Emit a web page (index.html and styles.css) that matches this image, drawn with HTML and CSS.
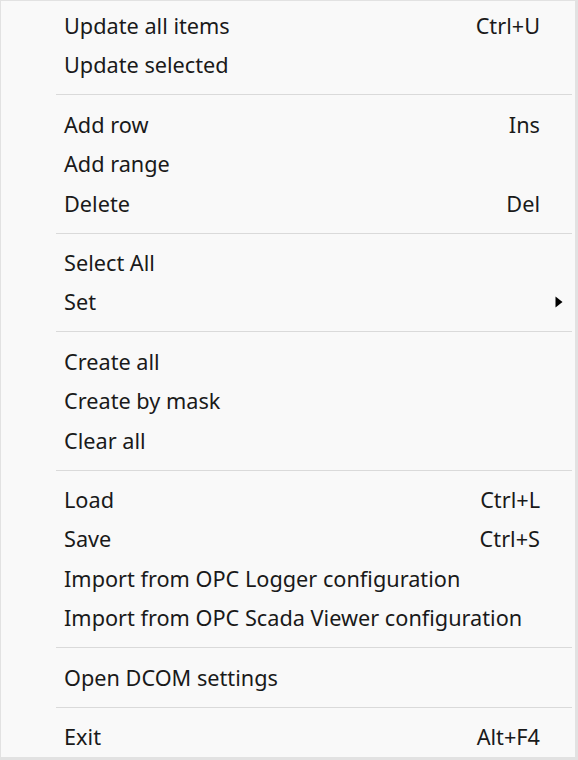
FILE: index.html
```html
<!DOCTYPE html>
<html>
<head>
<meta charset="utf-8">
<link rel="stylesheet" href="styles.css">
</head>
<body>
<ul class="menu">
  <li class="item"><span class="label">Update all items</span><span class="key">Ctrl+U</span><span class="sub"></span></li>
  <li class="item"><span class="label">Update selected</span><span class="key"></span><span class="sub"></span></li>
  <li class="sep"></li>
  <li class="item"><span class="label">Add row</span><span class="key">Ins</span><span class="sub"></span></li>
  <li class="item"><span class="label">Add range</span><span class="key"></span><span class="sub"></span></li>
  <li class="item"><span class="label">Delete</span><span class="key">Del</span><span class="sub"></span></li>
  <li class="sep"></li>
  <li class="item"><span class="label">Select All</span><span class="key"></span><span class="sub"></span></li>
  <li class="item"><span class="label">Set</span><span class="key"></span><span class="sub"><svg class="arrow" width="8" height="12" viewBox="0 0 8 12"><path d="M0.5 0.5 L7.5 6 L0.5 11.5 Z" fill="#000"/></svg></span></li>
  <li class="sep"></li>
  <li class="item"><span class="label">Create all</span><span class="key"></span><span class="sub"></span></li>
  <li class="item"><span class="label">Create by mask</span><span class="key"></span><span class="sub"></span></li>
  <li class="item"><span class="label">Clear all</span><span class="key"></span><span class="sub"></span></li>
  <li class="sep"></li>
  <li class="item"><span class="label">Load</span><span class="key">Ctrl+L</span><span class="sub"></span></li>
  <li class="item"><span class="label">Save</span><span class="key">Ctrl+S</span><span class="sub"></span></li>
  <li class="item"><span class="label">Import from OPC Logger configuration</span><span class="key"></span><span class="sub"></span></li>
  <li class="item"><span class="label">Import from OPC Scada Viewer configuration</span><span class="key"></span><span class="sub"></span></li>
  <li class="sep"></li>
  <li class="item"><span class="label">Open DCOM settings</span><span class="key"></span><span class="sub"></span></li>
  <li class="sep"></li>
  <li class="item"><span class="label">Exit</span><span class="key">Alt+F4</span><span class="sub"></span></li>
</ul>
</body>
</html>
```
FILE: styles.css
```css
html, body {
  margin: 0;
  padding: 0;
  background: #f9f9f9;
}
.menu {
  list-style: none;
  margin: 0;
  box-sizing: border-box;
  width: 578px;
  height: 760px;
  padding: 5px 0 0 0;
  background: #f9f9f9;
  border-style: solid;
  border-color: #e2e2e2;
  border-width: 1px 3px 3px 1px;
  font-family: "Noto Sans", "Open Sans", sans-serif;
  font-size: 21.7px;
  color: #1a1a1a;
}
.item {
  display: grid;
  grid-template-columns: 1fr auto 35px;
  align-items: center;
  height: 39.5px;
  padding-left: 63px;
  line-height: 1;
}
.sep {
  height: 19.75px;
  display: flex;
  align-items: center;
  margin: 0 3px 0 55px;
}
.sep::before {
  content: "";
  display: block;
  width: 100%;
  height: 1px;
  background: #dadada;
}
.sub {
  display: flex;
  align-items: center;
  padding-left: 15px;
}
.arrow {
  display: block;
}
```
